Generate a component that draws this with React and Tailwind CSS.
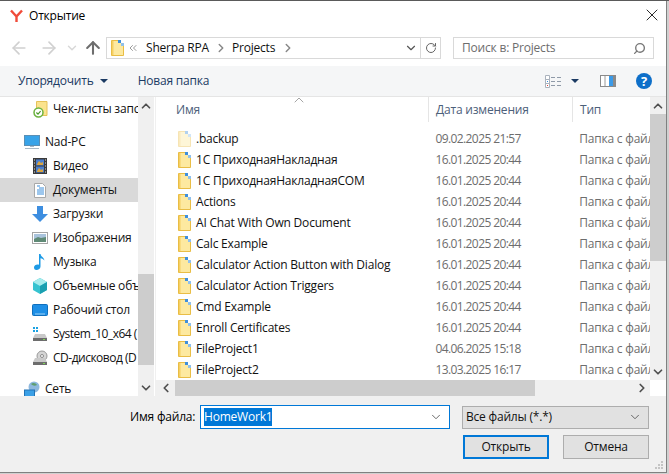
import React from 'react';
import { ArrowLeft, ArrowRight, ArrowUp, ChevronDown, ChevronUp, ChevronLeft, ChevronRight, ChevronsLeft, RotateCw, Search, X } from 'lucide-react';

const files = [
  ['.backup', '09.02.2025 21:57', true],
  ['1С ПриходнаяНакладная', '16.01.2025 20:44'],
  ['1С ПриходнаяНакладнаяCOM', '16.01.2025 20:44'],
  ['Actions', '16.01.2025 20:44'],
  ['AI Chat With Own Document', '16.01.2025 20:44'],
  ['Calc Example', '16.01.2025 20:44'],
  ['Calculator Action Button with Dialog', '16.01.2025 20:44'],
  ['Calculator Action Triggers', '16.01.2025 20:44'],
  ['Cmd Example', '16.01.2025 20:44'],
  ['Enroll Certificates', '16.01.2025 20:44'],
  ['FileProject1', '04.06.2025 15:18'],
  ['FileProject2', '13.03.2025 16:17'],
];

const Folder = ({ faded }) => (
  <svg width="13" height="16" viewBox="0 0 13 16" className={`shrink-0 ${faded ? 'opacity-40' : ''}`}>
    <path d="M.5 .5h7l5 5v10H.5z" fill="#fde9a0" stroke="#e9bd45" />
    <path d="M1 1h1.500v14H1z" fill="#f6cf62" />
    <rect x="7" y="0" width="3" height="3" fill="#3f8fdc" />
    <rect x="10" y="3" width="3" height="3" fill="#8fc0ec" />
  </svg>
);

const CheckFolder = () => (
  <svg width="15" height="17" viewBox="0 0 15 17" className="shrink-0">
    <path d="M3.500 .5h10.500v14H3.500z" fill="#fbe38e" stroke="#e6c25a" />
    <circle cx="5.500" cy="11.500" r="4.500" fill="#fff" stroke="#6cb33f" strokeWidth="1.500" />
    <path d="M3.400 11.500l1.600 1.600 2.600-3" fill="none" stroke="#4c9a2a" strokeWidth="1.200" />
  </svg>
);

const VideoIcon = () => (
  <svg width="14" height="16" viewBox="0 0 14 16">
    <rect x="0" y="0" width="14" height="16" fill="#3a3a3a" />
    <rect x="3" y="1.500" width="8" height="6" fill="#4a7fd0" />
    <rect x="3" y="8.500" width="8" height="6" fill="#4a7fd0" />
    <path d="M4 6l2-3 2 2 2-1v3H4zM4 13l2-3 2 2 2-1v3H4z" fill="#d9a441" />
    <path d="M1 2h1M1 5h1M1 8h1M1 11h1M1 14h1M12 2h1M12 5h1M12 8h1M12 11h1M12 14h1" stroke="#ddd" />
  </svg>
);

const DocIcon = () => (
  <svg width="12" height="15" viewBox="0 0 12 15">
    <path d="M.5 .5h8l3 3v11h-11z" fill="#fff" stroke="#a8a8a8" />
    <path d="M3 3h3M5 5h5M3 7h7M3 9h7M3 11h7" stroke="#3b8edb" />
  </svg>
);

const DownloadIcon = () => (
  <svg width="16" height="16" viewBox="0 0 16 16">
    <path d="M5 0h6v8h5l-8 8-8-8h5z" fill="#3d8ee0" />
  </svg>
);

const PictureIcon = () => (
  <svg width="16" height="12" viewBox="0 0 16 12">
    <rect x=".5" y=".5" width="15" height="11" fill="#fff" stroke="#a5a5a5" />
    <rect x="2" y="2" width="12" height="5" fill="#a9c3dc" />
    <path d="M2 7l4-2 3 1 5-1v5H2z" fill="#5f8a76" />
  </svg>
);

const MusicIcon = () => (
  <svg width="14" height="16" viewBox="0 0 14 16">
    <path d="M6 0h1.500c.4 2.600 3.500 3.400 4 6.500-1-1.300-2.500-2-4-2.300V12.500C7.500 14.500 5.500 16 3.500 16S1 14.700 1 13.300 2.800 10.500 4.500 10.500c.6 0 1.100.1 1.500.3z" fill="#1e9be6" />
  </svg>
);

const CubeIcon = () => (
  <svg width="16" height="16" viewBox="0 0 16 16">
    <path d="M8 0l7 4v8l-7 4-7-4V4z" fill="#35c3d0" />
    <path d="M8 0l7 4-7 4-7-4z" fill="#a6ecec" />
    <path d="M8 8l7-4v8l-7 4z" fill="#1a9fb0" />
  </svg>
);

const DesktopIcon = () => (
  <svg width="16" height="12" viewBox="0 0 16 12">
    <rect x=".5" y=".5" width="15" height="11" rx="1" fill="#1e8fe6" stroke="#0f6fbd" />
    <path d="M3 10h10" stroke="#9ad0f5" />
  </svg>
);

const DriveIcon = ({ windows }) => (
  <svg width="16" height="16" viewBox="0 0 16 16">
    {windows && <path d="M1 1h2v2H1zM4 1h2v2H4zM1 4h2v2H1zM4 4h2v2H4z" fill="#1ba1e2" />}
    {!windows && <circle cx="10" cy="6" r="5" fill="#d5d5d5" stroke="#9a9a9a" />}
    {!windows && <circle cx="10" cy="6" r="1.500" fill="#fff" stroke="#8a8a8a" />}
    <path d="M3 8h10l2 4H1z" fill="#c9c9c9" />
    <rect x="1" y="12" width="14" height="3" fill="#6d6d6d" />
    <rect x="11" y="13" width="2" height="1" fill="#7ed957" />
  </svg>
);

const PcIcon = () => (
  <svg width="16" height="16" viewBox="0 0 16 16">
    <rect x=".5" y="1.500" width="15" height="10" fill="#38a3e8" stroke="#5a8fb5" />
    <path d="M6 12.500h4M1 14.500h14" stroke="#a8b9c6" />
  </svg>
);

const NetworkIcon = () => (
  <svg width="16" height="17" viewBox="0 0 16 17">
    <circle cx="10" cy="6" r="5.500" fill="#8db8de" />
    <path d="M7 3c2-2 5-1 6 1-2 1-4 1-6-1z" fill="#5f9e6e" />
    <rect x=".5" y="9" width="10" height="7" fill="#3ba0e6" stroke="#2273b5" />
  </svg>
);

const NavRow = ({ icon, label, active, indent = 'pl-8', tight }) => (
  <div className={`flex h-6 items-center gap-[5px] overflow-hidden whitespace-nowrap ${indent} ${active ? 'bg-[#d9d9d9]' : ''}`}>
    <span className="flex w-4 shrink-0 justify-center">{icon}</span>
    <span className={tight ? 'tracking-[-0.5px]' : ''}>{label}</span>
  </div>
);

const ScrollBtn = ({ children, className = '' }) => (
  <div className={`flex shrink-0 items-center justify-center text-[#505050] ${className}`}>{children}</div>
);

export default function App() {
  return (
    <div className="flex h-[474px] w-[669px] flex-col overflow-hidden border-t border-t-[#5a5a5a] bg-[#d0d0d0] pr-[2px] pb-px text-[12px] tracking-[-0.2px] text-[#111] [font-family:'Open_Sans',sans-serif]">
      <div className="flex h-full flex-col border-r border-b border-[#808080] bg-white">
        {/* title bar */}
        <div className="flex h-[30px] shrink-0 items-center pl-[10px] pr-[4px]">
          <svg width="13" height="14" viewBox="0 0 13 14">
            <path d="M1 1.500l5.500 6M12 1.500l-5.500 6V13" fill="none" stroke="#f04b3a" strokeWidth="2.400" />
          </svg>
          <span className="ml-[6px] text-black">Открытие</span>
          <X size={20} strokeWidth={1} className="ml-auto -mt-[2px] text-black" />
        </div>

        {/* nav row */}
        <div className="flex h-[35px] shrink-0 items-start pl-[9px] pt-[6px]">
          <ArrowLeft size={20} strokeWidth={2} className="mt-px text-[#d0d0d0]" />
          <ArrowRight size={20} strokeWidth={2} className="ml-[10px] mt-px text-[#d0d0d0]" />
          <ChevronDown size={14} strokeWidth={2.500} className="ml-[6px] mt-[4px] text-[#d8d8d8]" />
          <ArrowUp size={20} strokeWidth={2.500} className="ml-[4px] mt-px text-[#6e6e6e]" />
          <div className="ml-[3px] flex h-[22px] w-[335px] items-center border border-[#d9d9d9] pl-[4px]">
            <Folder />
            <ChevronsLeft size={12} strokeWidth={1.500} className="ml-[3px] text-[#777]" />
            <span className="ml-[7px]">Sherpa RPA</span>
            <ChevronRight size={14} strokeWidth={2.500} className="ml-[5px] text-[#888]" />
            <span className="ml-[4px]">Projects</span>
            <ChevronRight size={14} strokeWidth={2.500} className="ml-[6px] text-[#888]" />
            <ChevronDown size={14} strokeWidth={2} className="ml-auto mr-[2px] text-[#555]" />
            <div className="flex h-full w-[20px] items-center justify-center border-l border-[#d9d9d9]">
              <RotateCw size={12} strokeWidth={2} className="text-[#666]" />
            </div>
          </div>
          <div className="ml-[12px] flex h-[22px] w-[201px] items-center justify-between border border-[#d9d9d9] pl-[8px] pr-[7px] text-[#6d6d6d]">
            <span>Поиск в: Projects</span>
            <Search size={13} strokeWidth={2.500} className="-scale-x-100 text-[#777]" />
          </div>
        </div>

        {/* toolbar */}
        <div className="flex h-[31px] shrink-0 items-center border-b border-[#e5e5e5] bg-[#f5f6f7] pl-[18px] pr-[14px] text-[#1b3a63]">
          <span>Упорядочить</span>
          <span className="ml-[6px] h-0 w-0 border-x-[4px] border-t-[4px] border-x-transparent border-t-[#1b3a63]" />
          <span className="ml-[30px]">Новая папка</span>
          <svg width="17" height="13" viewBox="0 0 17 13" className="ml-auto">
            <path d="M.5 .5h4v4h-4zM.5 4.500h4v4h-4zM.5 8.500h4v4h-4z" fill="#fff" stroke="#aab2bd" />
            <path d="M2 6h1v1H2z" fill="#3b8edb" />
            <path d="M2 10h1v1H2z" fill="#d9433a" />
            <path d="M6 2.500h4M12 2.500h4M6 6.500h4M12 6.500h4M6 10.500h4M12 10.500h4" stroke="#8f9aa8" />
          </svg>
          <span className="ml-[9px] h-0 w-0 border-x-[4px] border-t-[4px] border-x-transparent border-t-[#1b3a63]" />
          <svg width="16" height="12" viewBox="0 0 16 12" className="ml-[21px]">
            <rect x=".5" y=".5" width="15" height="11" fill="#fff" stroke="#8a8a8a" />
            <rect x="9" y="1" width="4" height="10" fill="#3b9ae8" />
            <rect x="13" y="1" width="2" height="10" fill="#8a8a8a" />
            <path d="M5 1v10" stroke="#9a9a9a" />
          </svg>
          <div className="ml-[20px] flex h-4 w-4 items-center justify-center rounded-full bg-[#0e6fc9] text-[13px] leading-none font-bold text-white">?</div>
        </div>

        {/* main panes */}
        <div className="flex min-h-0 flex-1">
          {/* nav pane */}
          <div className="flex w-[155px] shrink-0">
            <div className="w-[138px] shrink-0 overflow-hidden">
              <div className="flex h-6 items-center gap-[5px] overflow-hidden whitespace-nowrap pl-[33px]">
                <CheckFolder />
                <span>Чек-листы запс</span>
              </div>
              <div className="h-[9px]" />
              <NavRow icon={<PcIcon />} label="Nad-PC" indent="pl-6" />
              <NavRow icon={<VideoIcon />} label="Видео" />
              <NavRow icon={<DocIcon />} label="Документы" active />
              <NavRow icon={<DownloadIcon />} label="Загрузки" />
              <NavRow icon={<PictureIcon />} label="Изображения" />
              <NavRow icon={<MusicIcon />} label="Музыка" />
              <NavRow icon={<CubeIcon />} label="Объемные объ" />
              <NavRow icon={<DesktopIcon />} label="Рабочий стол" />
              <NavRow icon={<DriveIcon windows />} label="System_10_x64 (" tight />
              <NavRow icon={<DriveIcon />} label="CD-дисковод (D" tight />
              <div className="h-[7px]" />
              <NavRow icon={<NetworkIcon />} label="Сеть" indent="pl-6" />
            </div>
            <div className="flex w-[16px] shrink-0 flex-col bg-[#f0f0f0]">
              <ScrollBtn className="h-[17px]"><ChevronUp size={14} strokeWidth={3} /></ScrollBtn>
              <div className="h-[160px]" />
              <div className="h-[91px] bg-[#cdcdcd]" />
              <div className="flex-1" />
              <ScrollBtn className="h-[17px]"><ChevronDown size={14} strokeWidth={3} /></ScrollBtn>
            </div>
            <div className="w-px bg-white" />
          </div>

          {/* file list */}
          <div className="flex min-w-0 flex-1 flex-col border-l border-[#f0f0f0]">
            <div className="flex min-h-0 flex-1">
              <div className="min-w-0 flex-1 overflow-hidden">
                <div className="relative flex h-[25px] items-center text-[#4c607a]">
                  <ChevronUp size={16} strokeWidth={1} className="absolute left-[135px] -top-[5px] text-[#777]" />
                  <div className="flex h-full w-[273px] items-center border-r border-[#e5e5e5] pl-[20px]">Имя</div>
                  <div className="flex h-full w-[144px] items-center border-r border-[#e5e5e5] pl-[7px]">Дата изменения</div>
                  <div className="flex h-full items-center pl-[7px]">Тип</div>
                </div>
                <div className="pt-[6px]">
                  {files.map(([name, date, faded]) => (
                    <div key={name} className="flex h-[21px] items-center whitespace-nowrap">
                      <div className="flex w-[273px] items-center gap-[5px] pl-[22px]">
                        <Folder faded={faded} />
                        <span>{name}</span>
                      </div>
                      <span className="w-[144px] pl-[7px] tracking-[-0.6px] text-[#6d6d6d]">{date}</span>
                      <span className="w-[78px] overflow-hidden pl-[7px] text-[#6d6d6d]">Папка с файл</span>
                    </div>
                  ))}
                </div>
              </div>
              <div className="flex w-[16px] shrink-0 flex-col bg-[#f0f0f0]">
                <ScrollBtn className="h-[17px]"><ChevronUp size={14} strokeWidth={3} /></ScrollBtn>
                <div className="h-[147px] bg-[#cdcdcd]" />
                <div className="flex-1" />
                <ScrollBtn className="h-[17px]"><ChevronDown size={14} strokeWidth={3} /></ScrollBtn>
              </div>
            </div>
            <div className="flex h-[16px] shrink-0">
              <div className="flex flex-1 bg-[#f0f0f0]">
                <ScrollBtn className="w-[19px]"><ChevronLeft size={14} strokeWidth={3} /></ScrollBtn>
                <div className="w-[360px] bg-[#cdcdcd]" />
                <div className="flex-1" />
                <ScrollBtn className="w-[17px]"><ChevronRight size={14} strokeWidth={3} /></ScrollBtn>
              </div>
              <div className="w-[16px] bg-white" />
            </div>
          </div>
        </div>

        {/* footer */}
        <div className="relative h-[76px] shrink-0 bg-[#f0f0f0]">
          <div className="flex items-center pt-[9px]">
            <span className="ml-[130px] w-[70px] whitespace-nowrap text-black">Имя файла:</span>
            <div className="flex h-[24px] w-[250px] items-center border border-[#0078d7] bg-white pl-[3px] pr-[6px]">
              <span className="bg-[#0078d7] text-white">HomeWork1</span>
              <ChevronDown size={14} strokeWidth={1.500} className="ml-auto text-[#555]" />
            </div>
            <div className="ml-[12px] flex h-[23px] w-[187px] items-center border border-[#adadad] bg-[#e1e1e1] pl-[3px] pr-[6px]">
              <span>Все файлы (*.*)</span>
              <ChevronDown size={14} strokeWidth={1.500} className="ml-auto text-[#555]" />
            </div>
          </div>
          <div className="mt-[6px] flex justify-end pr-[17px]">
            <div className="flex h-[24px] w-[86px] items-center justify-center border-2 border-[#0078d7] bg-[#e1e1e1]">Открыть</div>
            <div className="ml-[14px] flex h-[24px] w-[86px] items-center justify-center border border-[#adadad] bg-[#e1e1e1]">Отмена</div>
          </div>
          <svg width="9" height="9" viewBox="0 0 9 9" className="absolute right-[2px] bottom-[2px]">
            <path d="M6 0h2v2H6zM3 3h2v2H3zM6 3h2v2H6zM0 6h2v2H0zM3 6h2v2H3zM6 6h2v2H6z" fill="#c4c4c4" />
          </svg>
        </div>
      </div>
    </div>
  );
}
